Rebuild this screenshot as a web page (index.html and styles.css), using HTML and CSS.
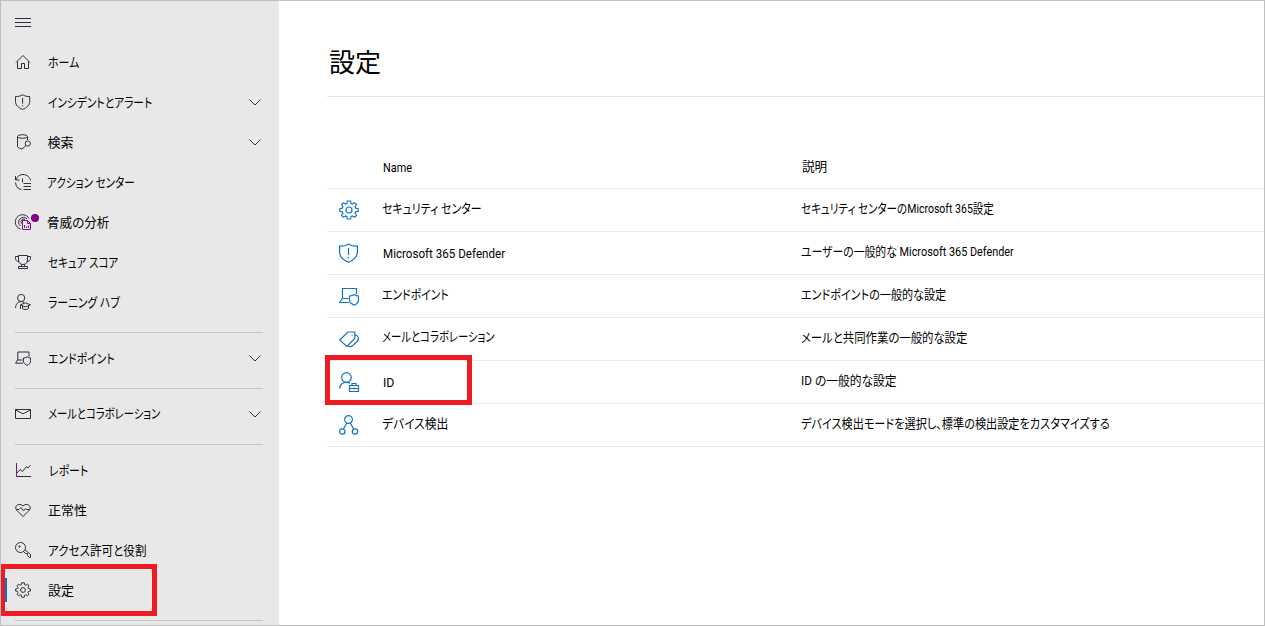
FILE: index.html
```html
<!DOCTYPE html>
<html lang="ja">
<head>
<meta charset="utf-8">
<title>設定</title>
<link rel="stylesheet" href="styles.css">
</head>
<body>
<svg class="defs" width="0" height="0">
  <symbol id="gear" viewBox="0 0 20 20"><path d="M8.400 1h3.200l.5 2.500 1.300.6 2.200-1.400 1.900 1.900-1.400 2.200.6 1.400 2.500.5v2.600l-2.500.5-.6 1.400 1.400 2.200-1.900 1.900-2.200-1.400-1.300.6-.5 2.500H8.400L7.900 16.500 6.600 15.900 4.400 17.300 2.500 15.400 3.900 13.200 3.300 11.800.8 11.300V8.700l2.500-.5.6-1.400L2.500 4.600 4.400 2.700 6.600 4.100 7.900 3.500z"/><circle cx="10" cy="10" r="3"/></symbol>
  <symbol id="shield" viewBox="0 0 20 20"><path d="M9.500.9C7 2.600 4 3.300.6 3.200V9c0 5 3.400 8 8.900 10.300C15 17 18.400 14 18.400 9V3.200C15 3.300 12 2.600 9.500.9zM9.500 5v7M9.500 14v1.500"/></symbol>
  <symbol id="device" viewBox="0 0 20 20"><path d="M3.500 12.500V2.500h14V8M9.500 12.500H3.200L.7 16.500H10M15.200 8.500c-1.500 1.100-3 1.500-4.700 1.500v3.500c0 2.800 2 4.500 4.700 5.600 2.700-1.100 4.300-2.800 4.300-5.600V10c-1.600 0-3-.4-4.300-1.500z"/></symbol>
</svg>
<div class="app">
  <nav class="side">
    <button class="menu" aria-label="メニュー"><svg class="ico" viewBox="0 0 16 16"><path d="M0 4.500h16M0 8.500h16M0 12.500h16"/></svg></button>
    <a class="item"><svg class="ico" viewBox="0 0 16 16"><path d="M1 8.500 8 1.500l7 7M2.500 7.500v7h4v-5h3v5h4v-7"/></svg><span class="t t-home">ホーム</span></a>
    <a class="item"><svg class="ico sym"><use href="#shield"/></svg><span class="t t-incident">インシデントとアラート</span><svg class="chev" viewBox="0 0 12 12"><path d="M.5 3.500 6 9 11.500 3.500"/></svg></a>
    <a class="item"><svg class="ico" viewBox="0 0 16 16"><path d="M2.500 2.500v10c0 1 1.500 1.500 4 2.500l1.500-1M12.500 2.500V6"/><ellipse cx="7.500" cy="2.500" rx="5" ry="1.800"/><circle cx="12.800" cy="9.500" r="2.600"/><path d="m11 11.500-3.500 3.200"/></svg><span class="t t-hunt">検索</span><svg class="chev" viewBox="0 0 12 12"><path d="M.5 3.500 6 9 11.500 3.500"/></svg></a>
    <a class="item"><svg class="ico" viewBox="0 0 16 16"><path d="M.5 2v4h4M1 5.500C2.500 2 5 .5 8 .5c4 0 7 2.800 7.500 6M.5 8.500c.3 4 2.500 6.500 6 7M7.500 4.500v4M8.500 9.500H16M8.500 12.500H16M8.500 15.500H16"/></svg><span class="t t-action">アクション センター</span></a>
    <a class="item"><span class="badged"><svg class="ico" viewBox="0 0 16 16"><path d="M14 4.500A7.300 7.300 0 1 0 5.500 15M12 5a4.800 4.800 0 1 0-6.500 7M10 5.500a2.700 2.700 0 0 0-3.500 4"/><path class="accent" d="M7.500 15.500v-9h5l3 3v6zM12.500 6.500v3h3M9.500 14v-3M11.500 14v-1.500M13.500 14v-2.500"/></svg><i class="badge"></i></span><span class="t t-threat">脅威の分析</span></a>
    <a class="item"><svg class="ico" viewBox="0 0 16 16"><path d="M3.500 1.500h9V6c0 3-2 4.500-4.500 4.500S3.500 9 3.500 6zM3.500 2.500h-3v2c0 2 1.500 3 3.500 3M12.500 2.500h3v2c0 2-1.500 3-3.500 3M6.500 10.500v2M9.500 10.500v2M3.500 14.500v-2h9v2z"/></svg><span class="t t-score">セキュア スコア</span></a>
    <a class="item"><svg class="ico" viewBox="0 0 16 16"><circle cx="6.200" cy="4" r="3.600"/><path d="M.5 14c.2-4 2.500-6.400 5.700-6.400 1.200 0 2.200.3 3 .9M5.500 10.800l5-2 5 2-5 2.200zM7.500 12v2.500c2 1.500 4 1.500 6 0V12M5.500 11v4"/></svg><span class="t t-learn">ラーニング ハブ</span></a>
    <hr>
    <a class="item"><svg class="ico sym"><use href="#device"/></svg><span class="t t-endpoint">エンドポイント</span><svg class="chev" viewBox="0 0 12 12"><path d="M.5 3.500 6 9 11.500 3.500"/></svg></a>
    <hr>
    <a class="item"><svg class="ico" viewBox="0 0 16 16"><path d="M.5 3.500h15v9H.5zM.5 4 8 7.800 15.500 4"/></svg><span class="t t-mail">メールとコラボレーション</span><svg class="chev" viewBox="0 0 12 12"><path d="M.5 3.500 6 9 11.500 3.500"/></svg></a>
    <hr>
    <a class="item"><svg class="ico" viewBox="0 0 16 16"><path class="accent" d="M1.500 1v13.500"/><path d="M1.500 14.500H16M2 11l3-3.500 2.500 2 4-5 1.500 1.500L15.500 3"/></svg><span class="t t-report">レポート</span></a>
    <a class="item"><svg class="ico" viewBox="0 0 16 16"><path d="M8 14.500 1.700 8.200C-1.500 4 4 .2 8 4c4-3.800 9.500 0 6.300 4.200zM1 7.500h3L6 5.500 8.500 9l2-2.500 1.200 1H15"/></svg><span class="t t-health">正常性</span></a>
    <a class="item"><svg class="ico" viewBox="0 0 16 16"><circle cx="5.500" cy="5.500" r="5"/><path d="m8.500 9.500 2 2h2v2l2 2h1v-3L10 7.800"/><circle cx="4.500" cy="4.500" r=".7"/></svg><span class="t t-perm">アクセス許可と役割</span></a>
    <a class="item selected"><svg class="ico sym"><use href="#gear"/></svg><span class="t t-settings">設定</span></a>
    <hr>
  </nav>
  <main class="main">
    <h1>設定</h1>
    <div class="table">
      <div class="row head"><span></span><span class="t n-head">Name</span><span class="t d-head">説明</span></div>
      <div class="row"><svg class="big"><use href="#gear"/></svg><span class="t n-center">セキュリティ センター</span><span class="t d-center">セキュリティ センターの<span class="en">Microsoft 365</span>設定</span></div>
      <div class="row"><svg class="big"><use href="#shield"/></svg><span class="t n-defender">Microsoft 365 Defender</span><span class="t d-defender">ユーザーの一般的な <span class="en">Microsoft 365 Defender</span></span></div>
      <div class="row"><svg class="big"><use href="#device"/></svg><span class="t n-endpoint">エンドポイント</span><span class="t d-endpoint">エンドポイントの一般的な設定</span></div>
      <div class="row"><svg class="big" viewBox="0 0 20 20"><path d="m.8 11 8-8h7v6.500l-8 8zM15.800 5.500C20 7 20.500 10 18 12.500l-4.500 4.200c-1.500 1.300-3.500 1-5.200-.2"/><path d="M13 5.800v1"/></svg><span class="t n-mail">メールとコラボレーション</span><span class="t d-mail">メールと共同作業の一般的な設定</span></div>
      <div class="row"><svg class="big" viewBox="0 0 20 20"><circle cx="7.500" cy="5.500" r="4.800"/><path d="M.7 16.500c.3-4 3-6.200 6.800-6.200 1.700 0 2.500.3 3.500 1M10.500 13.500h9v6h-9zM13 13.500v-2h4v2M10.500 16.500h9M15 15.500v2"/></svg><span class="t n-id">ID</span><span class="t d-id">ID の一般的な設定</span></div>
      <div class="row"><svg class="big" viewBox="0 0 20 20"><circle cx="9.500" cy="4.500" r="3.900"/><circle cx="3.300" cy="16.500" r="2.700"/><circle cx="16" cy="16.500" r="2.700"/><path d="M7.700 8 4.500 14M11.300 8l3.400 6"/></svg><span class="t n-discover">デバイス検出</span><span class="t d-discover">デバイス検出モードを選択し、標準の検出設定をカスタマイズする</span></div>
    </div>
  </main>
  <div class="mark mark-nav"></div>
  <div class="mark mark-id"></div>
</div>
</body>
</html>
```
FILE: styles.css
```css
* { box-sizing: border-box; }
body { margin: 0; font: 13px/20px Roboto, "Noto Sans CJK JP", sans-serif; font-feature-settings: "palt"; color: #000; }
.defs { position: absolute; }
.app { position: relative; display: flex; width: 1265px; height: 626px; overflow: hidden; border: 1px solid #bfbfbf; background: #fff; }
.side { flex: none; width: 278px; padding: 1px 16px 0 14px; background: #e8e8e8; overflow: hidden; }
.menu { display: flex; align-items: center; width: 40px; height: 40px; padding: 0; border: 0; background: none; }
.item { display: flex; align-items: center; height: 40px; }
.item .t { margin-left: 17px; }
.side hr { height: 1px; margin: 10px 0 5px; border: 0; background: #c6c6c6; }
.ico, .chev, .big { flex: none; fill: none; stroke: #2f2e3a; stroke-width: 1; overflow: visible; }
.ico { width: 16px; height: 16px; }
.sym { stroke-width: 1.250; }
.chev { width: 12px; height: 12px; margin: 0 2px 0 auto; }
.accent { stroke: #80107c; }
.big { width: 20px; height: 20px; margin-left: 12px; stroke: #1374c4; stroke-width: 1.200; }
.badged { position: relative; display: flex; }
.badge { position: absolute; left: 16px; top: 0; width: 8px; height: 8px; border-radius: 50%; background: #800080; }
.selected { position: relative; }
.selected::before { content: ""; position: absolute; left: -10px; top: 8px; width: 2px; height: 24px; background: #0078d4; }

/* Condensed labels: --w is the horizontal scale, --x and --y the optical offset */
.t { --w: 1; --x: 0px; --y: 0px; justify-self: start; white-space: nowrap; transform-origin: 0 50%; transform: translate(var(--x), var(--y)) scaleX(var(--w)); }
.item .t { --y: 1px; }
.item .t-home { --w: .84; }
.item .t-incident { --w: .825; }
.item .t-hunt { --x: -.5px; }
.item .t-action { --w: .815; --x: -1px; }
.item .t-threat { --w: .965; --x: -1px; }
.item .t-score { --w: .81; }
.item .t-learn { --w: .83; }
.item .t-endpoint { --w: .835; }
.item .t-mail { --w: .795; --y: 0px; }
.item .t-report { --w: .84; --x: 1px; }
.item .t-perm { --w: .89; }
.n-head { --w: .84; --x: 1px; --y: 1px; }
.n-center { --w: .84; --y: -1px; }
.n-defender { --w: .893; --x: 1px; --y: 1px; }
.n-endpoint { --w: .835; --y: -1px; }
.n-mail { --w: .797; --y: -2px; }
.n-id { --w: .95; --x: 1px; --y: 1px; }
.n-discover { --w: .905; --y: -1px; }
.d-head { --w: .97; --x: 1px; }
.d-center { --w: .81; --y: -1px; }
.d-defender { --w: .835; --y: -1px; }
.d-endpoint { --w: .853; --y: -1px; }
.d-mail { --w: .875; --y: -1px; }
.d-id { --w: .905; --y: -1px; }
.d-discover { --w: .858; --y: -1px; }

.main { flex: 1; padding-left: 48px; }
h1 { display: flex; align-items: center; height: 96px; margin: 0; padding: 29px 0 0 2px; border-bottom: 1px solid #e4e4e4; font-size: 26px; line-height: 40px; font-weight: 400; }
.table { padding-top: 49px; }
.row { display: grid; grid-template-columns: 55px 419px 1fr; align-items: center; height: 43px; border-bottom: 1px solid #eaeaea; }
.mark { position: absolute; border: 5px solid #ed1c24; }
.mark-nav { left: -1px; top: 563px; width: 157px; height: 52px; }
.mark-id { left: 324px; top: 354px; width: 147px; height: 50px; }
```
